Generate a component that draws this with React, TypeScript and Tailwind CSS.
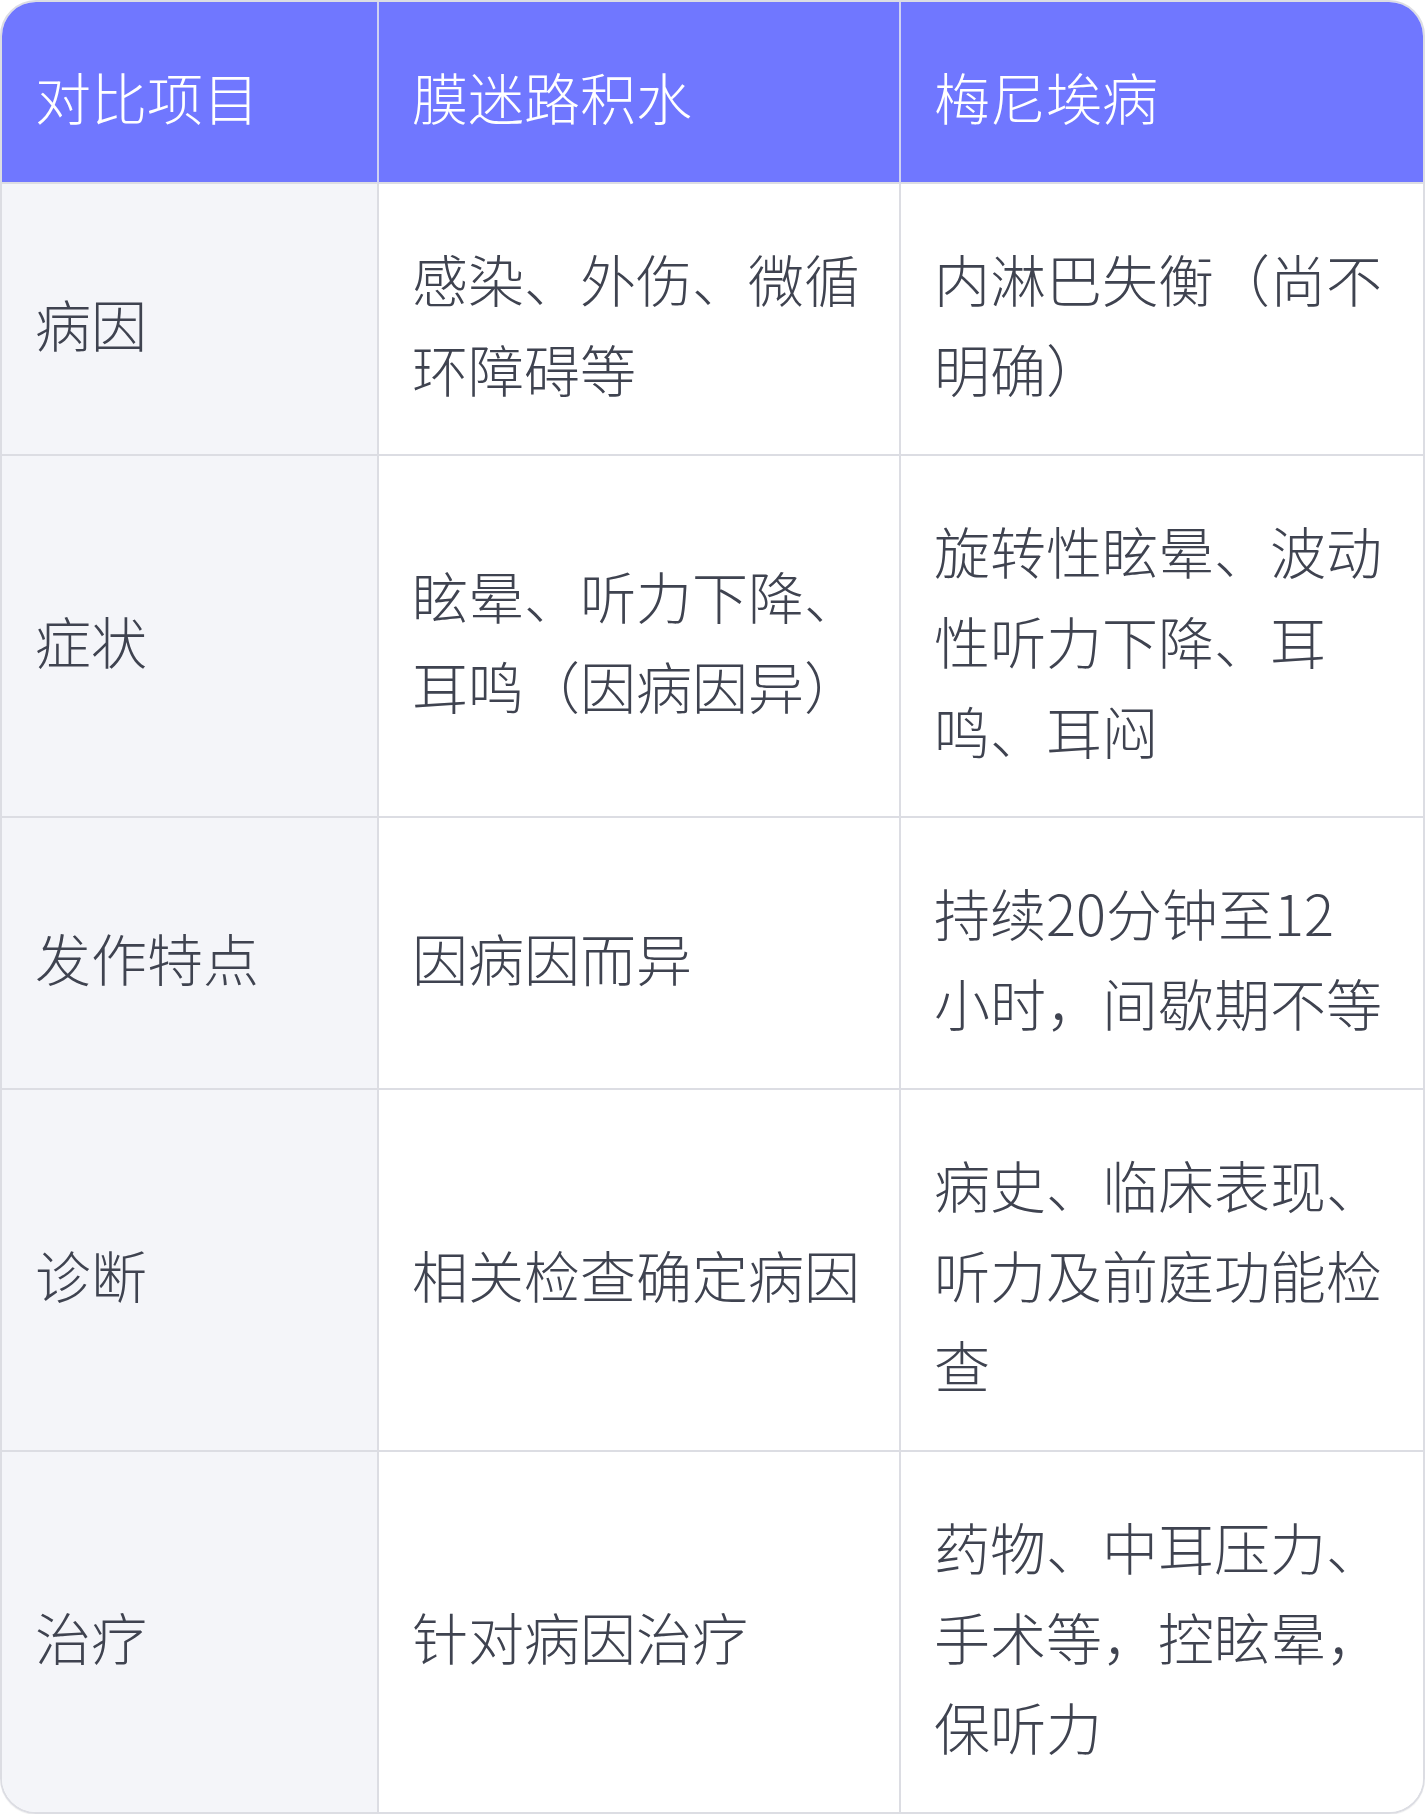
import React from "react";

type Row = { item: string; a: string; b: string };

const rows: Row[] = [
  { item: "病因", a: "感染、外伤、微循环障碍等", b: "内淋巴失衡（尚不明确）" },
  { item: "症状", a: "眩晕、听力下降、耳鸣（因病因异）", b: "旋转性眩晕、波动性听力下降、耳鸣、耳闷" },
  { item: "发作特点", a: "因病因而异", b: "持续20分钟至12\n小时，间歇期不等" },
  { item: "诊断", a: "相关检查确定病因", b: "病史、临床表现、听力及前庭功能检查" },
  { item: "治疗", a: "针对病因治疗", b: "药物、中耳压力、手术等，控眩晕，保听力" },
];

const font = "font-['Noto_Sans_CJK_SC','Noto_Sans',sans-serif]";
const cell = "px-[33px] pt-[49px] pb-[41px] text-left align-middle";

export default function App() {
  return (
    <div className="w-[1425px] bg-white">
      <div className={`w-[1425px] overflow-hidden rounded-[36px] border-2 border-[#dcdde3] shadow-[0_1px_1px_rgba(0,0,0,0.06)] ${font}`}>
        <table className="w-full table-fixed border-separate border-spacing-0 text-[56px] font-light leading-[90px]">
          <colgroup>
            <col className="w-[377px]" />
            <col className="w-[522px]" />
            <col />
          </colgroup>
          <thead>
            <tr className="bg-[#7077ff] text-white">
              <th className={`border-b-2 border-r-2 border-b-[#dcdde3] border-r-[#cfd1f2] font-light ${cell}`}>对比项目</th>
              <th className={`border-b-2 border-r-2 border-b-[#dcdde3] border-r-[#cfd1f2] font-light ${cell}`}>膜迷路积水</th>
              <th className={`border-b-2 border-b-[#dcdde3] font-light ${cell}`}>梅尼埃病</th>
            </tr>
          </thead>
          <tbody className="text-[#3f4350]">
            {rows.map((r, i) => {
              const last = i === rows.length - 1;
              const bb = last ? "" : "border-b-2";
              return (
                <tr key={r.item}>
                  <td className={`${bb} border-r-2 border-[#dcdde3] bg-[#f4f5f9] ${cell}`}>{r.item}</td>
                  <td className={`${bb} border-r-2 border-[#dcdde3] bg-white ${cell}`}>{r.a}</td>
                  <td className={`${bb} border-[#dcdde3] bg-white whitespace-pre-line ${cell}`}>{r.b}</td>
                </tr>
              );
            })}
          </tbody>
        </table>
      </div>
    </div>
  );
}
